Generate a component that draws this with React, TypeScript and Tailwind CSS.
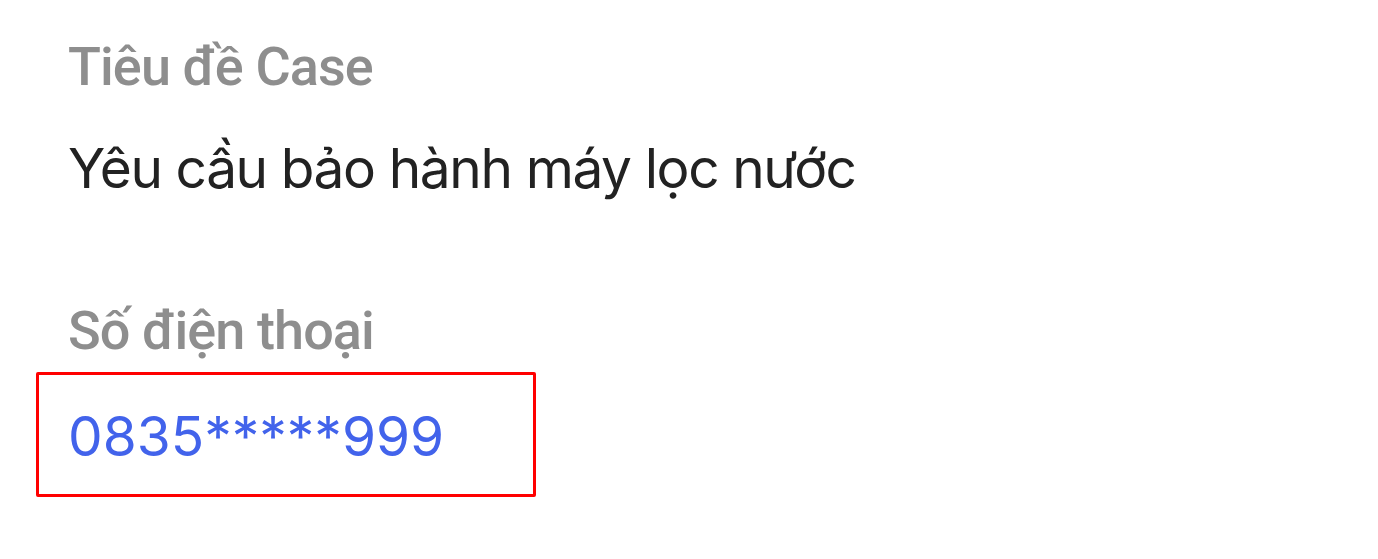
export default function App() {
  return (
    <div
      className="min-h-screen bg-white pl-[68px] pt-[35px]"
      style={{ fontFamily: "Inter, 'Noto Sans', sans-serif" }}
    >
      <div
        className="text-[54px] font-medium leading-[64px] tracking-[-0.9px] text-[#8e8e8e]"
        style={{ fontFamily: "Roboto, Inter, sans-serif" }}
      >
        Tiêu đề Case
      </div>
      <div className="mt-[36px] text-[55px] leading-[66px] tracking-[-1.4px] text-[#222222]">
        Yêu cầu bảo hành máy lọc nước
      </div>
      <div
        className="mt-[98px] text-[54px] font-medium leading-[64px] tracking-[-0.9px] text-[#8e8e8e]"
        style={{ fontFamily: "Roboto, Inter, sans-serif" }}
      >
        Số điện thoại
      </div>
      <div className="-ml-[32px] mt-[9px] w-[500px] rounded-[2px] border-[3px] border-[#ff0000] pb-[25px] pl-[29px] pt-[28px]">
        <div className="text-[55px] leading-[66px] text-[#4263eb]">0835*****999</div>
      </div>
    </div>
  );
}
